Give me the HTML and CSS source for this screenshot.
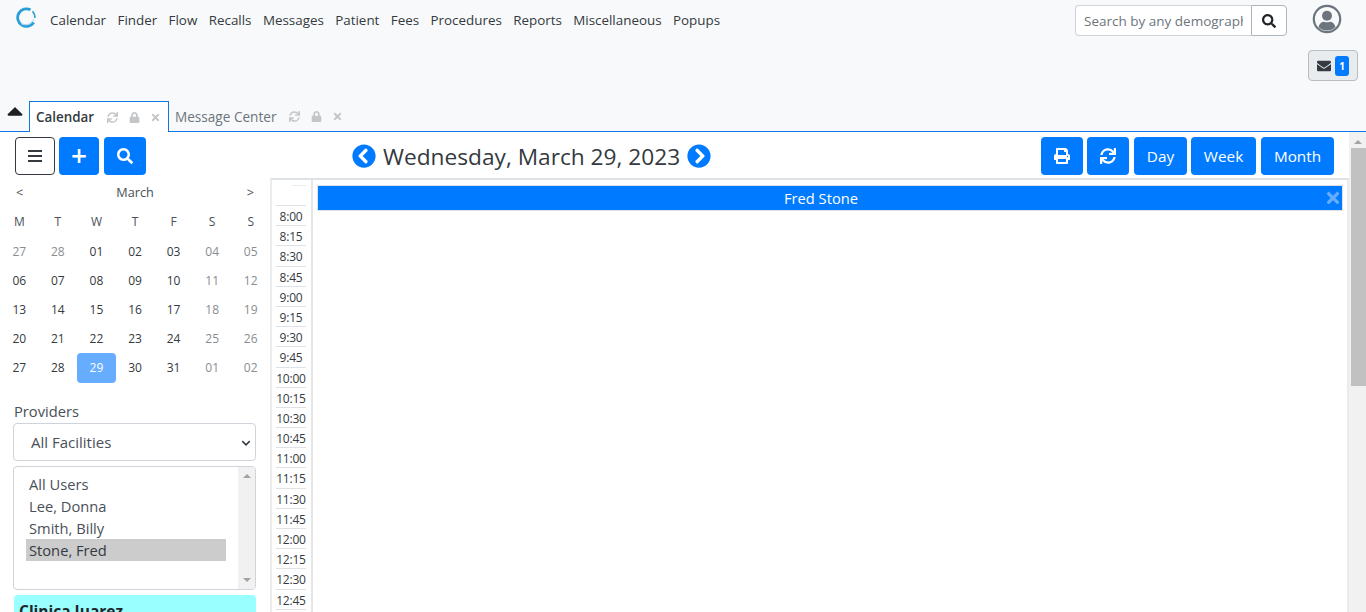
FILE: index.html
```html
<!DOCTYPE html>
<html>
  <head>
    <title>Calendar</title>
    <link rel="stylesheet" href="styles.css">
  </head>
  <body>
    <svg class="sprites" xmlns="http://www.w3.org/2000/svg">
      <symbol id="i-search" viewBox="0 0 512 512"><path d="M505 442.7L405.3 343c-4.5-4.5-10.6-7-17-7H372c27.6-35.3 44-79.7 44-128C416 93.1 322.9 0 208 0S0 93.1 0 208s93.1 208 208 208c48.3 0 92.7-16.4 128-44v16.3c0 6.4 2.5 12.5 7 17l99.7 99.7c9.4 9.4 24.6 9.4 33.9 0l28.3-28.3c9.4-9.4 9.4-24.6.1-34zM208 336c-70.7 0-128-57.2-128-128 0-70.7 57.2-128 128-128 70.7 0 128 57.2 128 128 0 70.7-57.2 128-128 128z"/></symbol>
      <symbol id="i-sync" viewBox="0 0 512 512"><path d="M440.65 12.57l4 82.77A247.16 247.16 0 0 0 255.83 8C134.73 8 33.91 94.92 12.29 209.82A12 12 0 0 0 24.09 224h49.05a12 12 0 0 0 11.67-9.26 175.91 175.91 0 0 1 317-56.94l-101.46-4.86a12 12 0 0 0-12.57 12v47.41a12 12 0 0 0 12 12H500a12 12 0 0 0 12-12V12a12 12 0 0 0-12-12h-47.37a12 12 0 0 0-11.98 12.57zM255.83 432a175.61 175.61 0 0 1-146-77.8l101.8 4.87a12 12 0 0 0 12.57-12v-47.4a12 12 0 0 0-12-12H12a12 12 0 0 0-12 12V500a12 12 0 0 0 12 12h47.35a12 12 0 0 0 12-12.6l-4.15-82.57A247.17 247.17 0 0 0 255.83 504c121.11 0 221.93-86.92 243.55-201.82a12 12 0 0 0-11.8-14.18h-49.05a12 12 0 0 0-11.67 9.26A175.86 175.86 0 0 1 255.83 432z"/></symbol>
      <symbol id="i-print" viewBox="0 0 512 512"><path d="M448 192V77.25c0-8.49-3.37-16.62-9.37-22.63L393.37 9.37c-6-6-14.14-9.37-22.63-9.37H96C78.33 0 64 14.33 64 32v160c-35.35 0-64 28.65-64 64v112c0 8.84 7.16 16 16 16h48v96c0 17.67 14.33 32 32 32h320c17.67 0 32-14.33 32-32v-96h48c8.84 0 16-7.16 16-16V256c0-35.35-28.65-64-64-64zm-64 256H128v-96h256v96zm0-224H128V64h192v48c0 8.84 7.16 16 16 16h48v96zm48 72c-13.25 0-24-10.75-24-24 0-13.26 10.75-24 24-24s24 10.74 24 24c0 13.25-10.75 24-24 24z"/></symbol>
      <symbol id="i-left" viewBox="0 0 512 512"><path d="M256 504C119 504 8 393 8 256S119 8 256 8s248 111 248 248-111 248-248 248zM142.1 273l135.5 135.5c9.4 9.4 24.6 9.4 33.9 0l17-17c9.4-9.4 9.4-24.6 0-33.9L226.9 256l101.6-101.6c9.4-9.4 9.4-24.6 0-33.9l-17-17c-9.4-9.4-24.6-9.4-33.9 0L142.1 239c-9.4 9.4-9.4 24.6 0 34z"/></symbol>
      <symbol id="i-right" viewBox="0 0 512 512"><path d="M256 8c137 0 248 111 248 248S393 504 256 504 8 393 8 256 119 8 256 8zm113.9 231L234.4 103.5c-9.4-9.4-24.6-9.4-33.9 0l-17 17c-9.4 9.4-9.4 24.6 0 33.9L285.1 256 183.5 357.6c-9.4 9.4-9.4 24.6 0 33.9l17 17c9.4 9.4 24.6 9.4 33.9 0L369.9 273c9.4-9.4 9.4-24.6 0-34z"/></symbol>
      <symbol id="i-envelope" viewBox="0 0 512 512"><path d="M502.3 190.8c3.9-3.1 9.7-.2 9.7 4.7V400c0 26.5-21.5 48-48 48H48c-26.5 0-48-21.5-48-48V195.6c0-5 5.7-7.8 9.7-4.7 22.4 17.4 52.1 39.5 154.1 113.6 21.1 15.4 56.7 47.8 92.2 47.6 35.7.3 72-32.8 92.3-47.6 102-74.1 131.6-96.3 154-113.7zM256 320c23.2.4 56.6-29.2 73.4-41.4 132.7-96.3 142.8-104.7 173.4-128.7 5.8-4.5 9.2-11.5 9.2-18.9v-19c0-26.5-21.5-48-48-48H48C21.5 64 0 85.5 0 112v19c0 7.4 3.4 14.3 9.2 18.9 30.6 23.9 40.7 32.4 173.4 128.7 16.8 12.2 50.2 41.8 73.4 41.4z"/></symbol>
      <symbol id="i-lock" viewBox="0 0 448 512"><path d="M400 224h-24v-72C376 68.2 307.8 0 224 0S72 68.2 72 152v72H48c-26.5 0-48 21.5-48 48v192c0 26.5 21.5 48 48 48h352c26.5 0 48-21.5 48-48V272c0-26.5-21.5-48-48-48zm-104 0H152v-72c0-39.7 32.3-72 72-72s72 32.3 72 72v72z"/></symbol>
      <symbol id="i-times" viewBox="0 0 352 512"><path d="M242.72 256l100.07-100.07c12.28-12.28 12.28-32.19 0-44.48l-22.24-22.24c-12.28-12.28-32.19-12.28-44.48 0L176 189.28 75.93 89.21c-12.28-12.28-32.19-12.28-44.48 0L9.21 111.45c-12.28 12.28-12.28 32.19 0 44.48L109.28 256 9.21 356.07c-12.28 12.28-12.28 32.19 0 44.48l22.24 22.24c12.28 12.28 32.2 12.28 44.48 0L176 322.72l100.07 100.07c12.28 12.28 32.2 12.28 44.48 0l22.24-22.24c12.28-12.28 12.28-32.19 0-44.48L242.72 256z"/></symbol>
      <symbol id="i-caret-up" viewBox="0 0 320 512"><path d="M288.662 352H31.338c-17.818 0-26.741-21.543-14.142-34.142l128.662-128.662c7.81-7.81 20.474-7.81 28.284 0l128.662 128.662c12.6 12.599 3.676 34.142-14.142 34.142z"/></symbol>
    </svg>

    <header class="topbar">
      <div class="nav-row">
        <svg class="logo" viewBox="0 0 22 22">
          <path d="M15.500 2.800A8.800 8.800 0 1 0 18.800 15.500" fill="none" stroke="#2a9fd6" stroke-width="2.800"/>
          <path d="M6 16.500c4.500 2.500 9.500 1 13-4" fill="none" stroke="#a5daf2" stroke-width="1.200"/>
          <path d="M17.500 4.200c1.800 2 2.600 4 2.300 6.800" fill="none" stroke="#2a9fd6" stroke-width="1.600"/>
        </svg>
        <nav class="menu">
          <span>Calendar</span>
          <span>Finder</span>
          <span>Flow</span>
          <span>Recalls</span>
          <span>Messages</span>
          <span>Patient</span>
          <span>Fees</span>
          <span>Procedures</span>
          <span>Reports</span>
          <span>Miscellaneous</span>
          <span>Popups</span>
        </nav>
        <div class="search-group">
          <input class="search-input" type="text" placeholder="Search by any demographics">
          <button class="search-btn"><svg class="icon-14"><use href="#i-search"/></svg></button>
        </div>
        <svg class="avatar" viewBox="0 0 30 30">
          <circle cx="15" cy="15" r="13.200" fill="none" stroke="#6c757d" stroke-width="2.200"/>
          <circle cx="15" cy="11.800" r="5" fill="#6c757d"/>
          <path d="M6.500 23c1-4 4-5.300 5.500-5.300c2 .8 4 .8 6 0c1.500 0 4.500 1.300 5.500 5.300a12 12 0 0 1-17 0z" fill="#6c757d"/>
        </svg>
      </div>
      <div class="msg-row">
        <button class="msg-btn">
          <svg class="icon-14 icon-dark"><use href="#i-envelope"/></svg>
          <span class="badge">1</span>
        </button>
      </div>
      <div class="tab-row">
        <svg class="collapse-arrow"><use href="#i-caret-up"/></svg>
        <div class="tab tab-active">
          <span class="tab-name">Calendar</span>
          <svg class="tab-icon"><use href="#i-sync"/></svg>
          <svg class="tab-icon"><use href="#i-lock"/></svg>
          <svg class="tab-icon"><use href="#i-times"/></svg>
        </div>
        <div class="tab">
          <span class="tab-name">Message Center</span>
          <svg class="tab-icon"><use href="#i-sync"/></svg>
          <svg class="tab-icon"><use href="#i-lock"/></svg>
          <svg class="tab-icon"><use href="#i-times"/></svg>
        </div>
      </div>
    </header>

    <div class="frame">
      <main class="content">
        <aside class="sidebar">
          <div class="side-tools">
            <button class="btn btn-outline"><span class="bars"><i></i><i></i><i></i></span></button>
            <button class="btn btn-blue btn-plus">+</button>
            <button class="btn btn-blue"><svg class="icon-16"><use href="#i-search"/></svg></button>
          </div>
          <div class="month-head"><span>&lt;</span><span class="month-name">March</span><span>&gt;</span></div>
          <div class="dow">
            <span>M</span><span>T</span><span>W</span><span>T</span><span>F</span><span>S</span><span>S</span>
          </div>
          <div class="days">
            <span class="off">27</span><span class="off">28</span><span>01</span><span>02</span><span>03</span><span class="off">04</span><span class="off">05</span>
            <span>06</span><span>07</span><span>08</span><span>09</span><span>10</span><span class="off">11</span><span class="off">12</span>
            <span>13</span><span>14</span><span>15</span><span>16</span><span>17</span><span class="off">18</span><span class="off">19</span>
            <span>20</span><span>21</span><span>22</span><span>23</span><span>24</span><span class="off">25</span><span class="off">26</span>
            <span>27</span><span>28</span><span class="today">29</span><span>30</span><span>31</span><span class="off">01</span><span class="off">02</span>
          </div>
          <div class="providers-label">Providers</div>
          <div class="fake-select">All Facilities
            <svg class="select-caret" viewBox="0 0 16 16"><path d="M2 5l6 6 6-6" fill="none" stroke="#343a40" stroke-width="2.400"/></svg>
          </div>
          <div class="listbox">
            <div class="options">
              <div class="option">All Users</div>
              <div class="option">Lee, Donna</div>
              <div class="option">Smith, Billy</div>
              <div class="option option-selected">Stone, Fred</div>
            </div>
            <div class="list-scroll"><span class="up-small"></span><span class="down-small"></span></div>
          </div>
          <div class="facility">Clinica Juarez</div>
        </aside>

        <section class="main-col">
          <div class="toolbar">
            <div class="date-title">
              <svg class="icon-24"><use href="#i-left"/></svg>
              <span>Wednesday, March 29, 2023</span>
              <svg class="icon-24"><use href="#i-right"/></svg>
            </div>
            <div class="view-btns">
              <button class="btn btn-blue btn-icon"><svg class="icon-16"><use href="#i-print"/></svg></button>
              <button class="btn btn-blue btn-icon btn-spaced"><svg class="icon-16"><use href="#i-sync"/></svg></button>
              <button class="btn btn-blue btn-day">Day</button>
              <button class="btn btn-blue btn-week btn-spaced">Week</button>
              <button class="btn btn-blue btn-month">Month</button>
            </div>
          </div>
          <div class="schedule">
            <div class="times">
              <div class="times-head"><i></i></div>
              <div class="time">8:00</div><div class="time">8:15</div><div class="time">8:30</div><div class="time">8:45</div>
              <div class="time">9:00</div><div class="time">9:15</div><div class="time">9:30</div><div class="time">9:45</div>
              <div class="time">10:00</div><div class="time">10:15</div><div class="time">10:30</div><div class="time">10:45</div>
              <div class="time">11:00</div><div class="time">11:15</div><div class="time">11:30</div><div class="time">11:45</div>
              <div class="time">12:00</div><div class="time">12:15</div><div class="time">12:30</div><div class="time">12:45</div>
            </div>
            <div class="day-col">
              <div class="provider-bar">
                <span class="provider-name">Fred Stone</span>
                <svg class="bar-close"><use href="#i-times"/></svg>
              </div>
            </div>
          </div>
        </section>
      </main>
      <div class="scrollbar">
        <span class="up-arrow"></span>
        <div class="thumb"></div>
      </div>
    </div>
  </body>
</html>
```

FILE: styles.css
```css
* {
  box-sizing: border-box;
}
html, body {
  height: 100%;
}
body {
  margin: 0;
  background-color: #fff;
  color: #212529;
  font-family: "Open Sans", "Noto Sans", sans-serif;
  overflow: hidden;
  display: flex;
  flex-direction: column;
}
svg {
  fill: currentColor;
}
.sprites {
  display: none;
}
button {
  font-family: inherit;
}
.icon-14 {
  width: 14px;
  height: 14px;
}
.icon-16 {
  width: 16px;
  height: 16px;
}
.icon-24 {
  width: 24px;
  height: 24px;
  color: #007bff;
}
.icon-dark {
  color: #343a40;
}

/* top header */
.topbar {
  height: 132px;
  flex: none;
  background-color: #f8f9fa;
  border-bottom: 1px solid #0f76e8;
  display: flex;
  flex-direction: column;
}
.nav-row {
  height: 50px;
  display: flex;
  align-items: flex-start;
  padding: 5px 24px 0 15px;
}
.logo {
  width: 22px;
  height: 22px;
  margin-top: 2px;
}
.menu {
  display: flex;
  gap: 11.400px;
  margin-left: 13px;
  padding-top: 6px;
  font-size: 13.400px;
  line-height: 18px;
  color: #343a40;
}
.search-group {
  display: flex;
  margin-left: auto;
  margin-right: 25px;
}
.search-input {
  width: 176px;
  height: 31px;
  border: 1px solid #ced4da;
  border-right: 0;
  border-radius: 4px 0 0 4px;
  background: #fff;
  padding: 0 8px;
  font-family: inherit;
  font-size: 13.500px;
}
.search-input::placeholder {
  color: #6c757d;
  opacity: 1;
}
.search-btn {
  width: 36px;
  height: 31px;
  border: 1px solid #adb5bd;
  border-radius: 0 4px 4px 0;
  background: #fff;
  color: #212529;
  padding: 0;
  display: flex;
  align-items: center;
  justify-content: center;
}
.avatar {
  width: 30px;
  height: 30px;
  margin-top: -1px;
}
.msg-row {
  display: flex;
  justify-content: flex-end;
  padding-right: 8px;
}
.msg-btn {
  width: 50px;
  height: 31px;
  background-color: #e9ecef;
  border: 1px solid #b8bdc2;
  border-radius: 4px;
  padding: 0 0 0 8px;
  display: flex;
  align-items: center;
  gap: 4px;
}
.badge {
  width: 14px;
  height: 20px;
  background-color: #007bff;
  color: #fff;
  border-radius: 3px;
  font-size: 10px;
  font-weight: 700;
  line-height: 20px;
  text-align: center;
}
.tab-row {
  margin-top: auto;
  height: 31px;
  display: flex;
  align-items: flex-end;
  padding-left: 7px;
  margin-bottom: -1px;
}
.collapse-arrow {
  width: 16px;
  height: 26px;
  color: #1d2124;
  margin-bottom: 8px;
  margin-right: 6px;
  flex: none;
}
.tab {
  height: 31px;
  display: flex;
  align-items: center;
  padding: 0 7px 0 6px;
  font-size: 13.600px;
  color: #6c757d;
}
.tab-active {
  width: 140px;
  background-color: #fff;
  border: 1px solid #0f76e8;
  border-bottom: 0;
  color: #343a40;
  font-weight: 600;
}
.tab-name {
  margin-right: 13px;
}
.tab-active .tab-name {
  font-size: 13.400px;
}
.tab-icon {
  width: 11px;
  height: 11px;
  color: #c3c7ca;
  margin-right: 10.500px;
  flex: none;
}

/* page area */
.frame {
  flex: 1;
  min-height: 0;
  display: flex;
}
.content {
  flex: 1;
  min-width: 0;
  display: flex;
  overflow: hidden;
}
.scrollbar {
  width: 17px;
  flex: none;
  background-color: #f1f1f1;
  display: flex;
  flex-direction: column;
  align-items: center;
}
.up-arrow {
  width: 0;
  height: 0;
  border-left: 4px solid transparent;
  border-right: 4px solid transparent;
  border-bottom: 4px solid #a3a3a3;
  margin: 8px 0 4px;
}
.thumb {
  width: 15px;
  height: 238px;
  align-self: flex-end;
  background-color: #c1c1c1;
}

/* left column */
.sidebar {
  width: 270px;
  flex: none;
  padding: 5px 14px 0;
}
.side-tools {
  display: flex;
  gap: 4px;
  margin-left: 1px;
}
.btn {
  height: 38px;
  border: 0;
  border-radius: 4px;
  padding: 0 13px;
  font-size: 15.300px;
  display: flex;
  align-items: center;
  justify-content: center;
}
.btn-blue {
  background-color: #007bff;
  color: #fff;
}
.side-tools .btn {
  width: 40px;
}
.side-tools .btn:last-child {
  width: 42px;
  margin-left: 1px;
}
.btn-plus {
  font-size: 28px;
  font-weight: 600;
  padding: 0 0 3px;
}
.btn-outline {
  background: #fff;
  border: 1px solid #343a40;
}
.bars {
  display: flex;
  flex-direction: column;
  gap: 3px;
}
.bars i {
  width: 14px;
  height: 2px;
  background-color: #343a40;
}
.month-head {
  display: flex;
  justify-content: space-between;
  padding: 0 2px;
  margin-top: 8px;
  height: 18px;
  font-size: 12.700px;
  line-height: 18px;
  color: #495057;
}
.dow, .days {
  display: grid;
  grid-template-columns: repeat(7, 1fr);
  text-align: center;
  margin-left: -14px;
  margin-right: -14px;
  font-size: 12px;
  color: #495057;
}
.dow {
  margin-top: 12px;
  height: 24px;
  line-height: 18px;
}
.days {
  grid-auto-rows: 29px;
  line-height: 29px;
  color: #343a40;
}
.days .off {
  color: #8a8d90;
}
.days .today {
  background-color: #66adff;
  color: #fff;
  border-radius: 4px;
  height: 30px;
}
.providers-label {
  margin-top: 20px;
  font-size: 14.700px;
  line-height: 19px;
  color: #495057;
}
.fake-select {
  position: relative;
  height: 38px;
  margin-top: 2px;
  margin-left: -1px;
  padding-left: 17px;
  border: 1px solid #ced4da;
  border-radius: 4px;
  background-color: #fff;
  font-size: 15px;
  line-height: 36px;
  color: #495057;
}
.select-caret {
  position: absolute;
  right: 4px;
  top: 14px;
  width: 10px;
  height: 10px;
}
.listbox {
  height: 124px;
  margin-top: 5px;
  margin-left: -1px;
  border: 1px solid #ced4da;
  border-radius: 4px;
  display: flex;
  overflow: hidden;
}
.options {
  flex: 1;
  padding: 6px 12px 0 12px;
  font-size: 14.700px;
  line-height: 22px;
  color: #495057;
}
.option {
  padding-left: 3px;
}
.option-selected {
  background-color: #cccccc;
  color: #343a40;
}
.list-scroll {
  width: 17px;
  background-color: #f1f1f1;
  display: flex;
  flex-direction: column;
  justify-content: space-between;
  align-items: center;
  padding: 7px 0;
}
.up-small, .down-small {
  width: 0;
  height: 0;
  border-left: 4px solid transparent;
  border-right: 4px solid transparent;
}
.up-small {
  border-bottom: 4px solid #a3a3a3;
}
.down-small {
  border-top: 4px solid #a3a3a3;
}
.facility {
  margin-top: 5px;
  padding: 5px 5px 0;
  height: 40px;
  background-color: #99ffff;
  border-radius: 4px;
  font-size: 15.500px;
  font-weight: 700;
  color: #212529;
}

/* schedule */
.main-col {
  flex: 1;
  min-width: 0;
  display: flex;
  flex-direction: column;
}
.toolbar {
  height: 46px;
  flex: none;
  display: flex;
  align-items: flex-start;
  padding-top: 5px;
}
.date-title {
  margin-left: 82px;
  display: flex;
  align-items: center;
  gap: 7px;
  height: 38px;
  font-size: 22.700px;
  color: #343a40;
}
.view-btns {
  margin-left: auto;
  margin-right: 15px;
  display: flex;
  gap: 4px;
}
.btn-icon {
  width: 42px;
  padding: 0;
}
.btn-spaced {
  margin-right: 1px;
}
.btn-day {
  width: 53px;
  padding: 0;
}
.btn-week {
  width: 65px;
  padding: 0;
}
.btn-month {
  width: 73px;
  padding: 0;
}
.schedule {
  flex: 1;
  min-height: 0;
  display: flex;
  border-top: 2px solid #dee2e6;
  border-left: 2px solid #e9ecef;
  border-right: 2px solid #e9ecef;
}
.times {
  width: 41px;
  flex: none;
  border-right: 2px solid #e4e7ea;
  padding: 0 5px 0 4px;
}
.times-head {
  height: 26px;
  border-bottom: 1px solid #dee2e6;
  position: relative;
}
.times-head i {
  position: absolute;
  top: 5px;
  right: 0;
  width: 14px;
  height: 1px;
  background-color: #e9ecef;
}
.time {
  height: 20.200px;
  border-bottom: 1px solid #dee2e6;
  text-align: center;
  font-size: 12px;
  line-height: 21px;
  color: #343a40;
  letter-spacing: -0.2px;
  white-space: nowrap;
}
.day-col {
  flex: 1;
  padding: 6px 5px 0;
}
.provider-bar {
  height: 24px;
  background-color: #007bff;
  box-shadow: 0 0 0 1px #dee2e6;
  color: #fff;
  font-size: 14.700px;
  line-height: 24px;
  text-align: center;
  padding-right: 18px;
  position: relative;
}
.bar-close {
  position: absolute;
  right: 0;
  top: 3px;
  width: 18px;
  height: 18px;
  color: #66adff;
}
```
